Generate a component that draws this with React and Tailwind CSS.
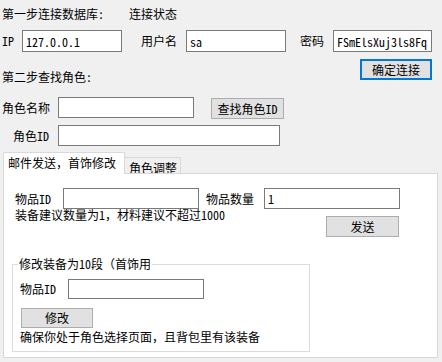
import React from "react";

const Btn = ({ className = "", border = "border border-[#adadad]", children }) => (
  <button
    type="button"
    className={
      "flex items-center justify-center bg-[#e1e1e1] text-[12px] leading-[12px] text-black " +
      border +
      " " +
      className
    }
  >
    {children}
  </button>
);

const Inp = ({ className = "", value = "" }) => (
  <input
    readOnly
    value={value}
    className={
      "block bg-white border border-[#7a7a7a] px-[3px] text-[12px] leading-[12px] text-black outline-none " +
      className
    }
  />
);

export default function App() {
  return (
    <div className="w-[442px] h-[362px] bg-[#f0f0f0] text-black text-[12px] leading-[12px] font-['Noto_Sans_Mono_CJK_SC','Noto_Sans_CJK_SC',sans-serif] overflow-hidden flex flex-col">
      {/* Row 1 */}
      <div className="flex mt-[8px] h-[12px]">
        <span className="pl-[2px] w-[129px]">第一步连接数据库:</span>
        <span>连接状态</span>
      </div>

      {/* Row 2 */}
      <div className="flex items-center mt-[10px] h-[22px]">
        <span className="pl-[2px] w-[22px]">IP</span>
        <Inp className="w-[100px] h-[22px]" value="127.0.0.1" />
        <span className="ml-[19px] w-[45px]">用户名</span>
        <Inp className="w-[100px] h-[22px]" value="sa" />
        <span className="ml-[14px] w-[33px]">密码</span>
        <Inp className="w-[99px] h-[22px] px-[2px]" value="FSmElsXuj3ls8Fq" />
      </div>

      {/* Row 3 */}
      <div className="flex items-start mt-[7px]">
        <span className="pl-[2px] mt-[12px] w-[360px]">第二步查找角色:</span>
        <Btn border="border-2 border-[#0078d7]" className="w-[72px] h-[21px]">确定连接</Btn>
      </div>

      {/* Row 4 */}
      <div className="flex items-start mt-[14px]">
        <span className="pl-[2px] w-[58px] mt-[5px]">角色名称</span>
        <Inp className="w-[136px] h-[21px]" />
        <Btn className="ml-[17px] mt-[1px] w-[73px] h-[21px]">查找角色ID</Btn>
      </div>

      {/* Row 5 */}
      <div className="flex items-center mt-[6px]">
        <span className="pl-[13px] w-[58px]">角色ID</span>
        <Inp className="w-[222px] h-[21px]" />
      </div>

      {/* Tabs */}
      <div className="ml-[3px] mt-[6px] w-[435px] flex flex-col">
        <div className="flex items-end h-[21px]">
          <div className="relative z-10 mb-[-1px] w-[122px] h-[22px] bg-white border border-[#d9d9d9] border-b-0 pl-[4px] pt-[4px]">
            邮件发送，首饰修改
          </div>
          <div className="w-[56px] h-[16px] bg-[#f0f0f0] border border-[#d9d9d9] border-l-0 border-b-0 pl-[4px] pt-[4px]">
            角色调整
          </div>
        </div>
        <div className="h-[185px] bg-white border border-[#d9d9d9] flex flex-col">
          {/* Row A */}
          <div className="flex items-center mt-[14px]">
            <span className="pl-[11px] w-[59px]">物品ID</span>
            <Inp className="w-[136px] h-[21px]" />
            <span className="ml-[7px] w-[58px]">物品数量</span>
            <Inp className="w-[136px] h-[21px]" value="1" />
          </div>
          {/* Row B */}
          <div className="flex items-start">
            <span className="pl-[11px] w-[322px] mt-[0px]">装备建议数量为1，材料建议不超过1000</span>
            <Btn className="mt-[7px] w-[73px] h-[21px]">发送</Btn>
          </div>
          {/* Group box */}
          <fieldset className="ml-[8px] mt-[21px] w-[298px] h-[94px] border border-[#dcdcdc] flex flex-col">
            <legend className="ml-[5px] px-[1px] leading-[12px]">修改装备为10段（首饰用</legend>
            <div className="flex items-center mt-[9px]">
              <span className="pl-[7px] w-[55px]">物品ID</span>
              <Inp className="w-[136px] h-[20px]" />
            </div>
            <Btn className="ml-[8px] mt-[9px] w-[72px] h-[20px]">修改</Btn>
            <span className="pl-[7px] mt-[3px]">确保你处于角色选择页面，且背包里有该装备</span>
          </fieldset>
        </div>
      </div>
    </div>
  );
}
